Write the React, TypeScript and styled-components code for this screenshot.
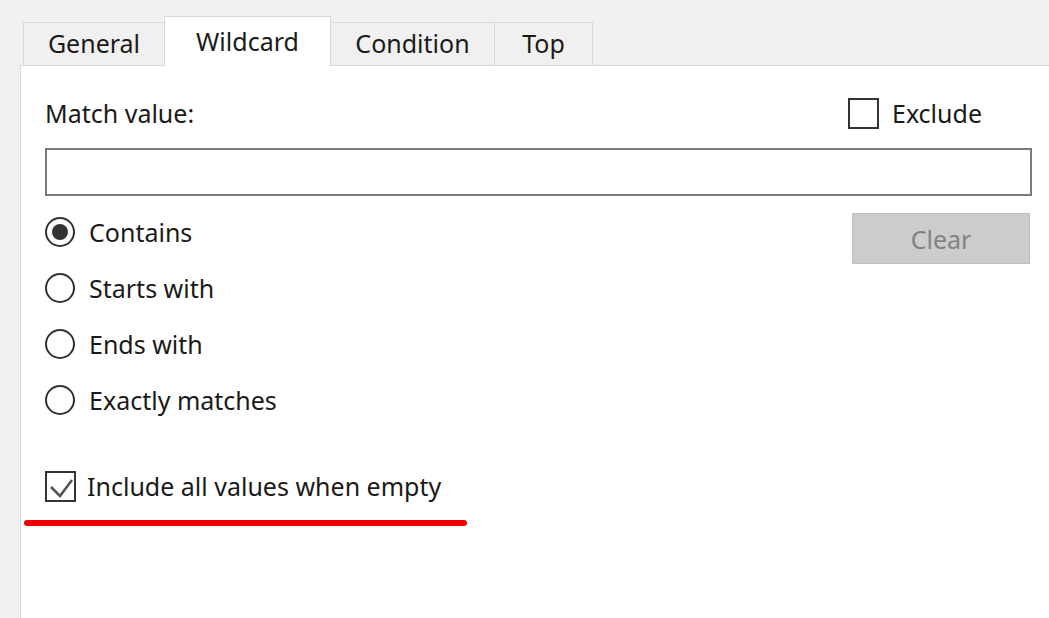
import React from 'react';
import styled, { createGlobalStyle } from 'styled-components';

const GlobalStyle = createGlobalStyle`
  html, body {
    margin: 0;
    padding: 0;
    background: #f0f0f0;
    overflow: hidden;
  }
  body {
    font-family: "Noto Sans", "Open Sans", sans-serif;
    font-size: 25px;
    color: #1a1a1a;
  }
`;

const Window = styled.div`
  display: flex;
  flex-direction: column;
  height: 100vh;
  box-sizing: border-box;
  padding: 16px 0 0 20px;
`;

const TabStrip = styled.div`
  display: flex;
  align-items: flex-end;
  padding-left: 4px;
  height: 49px;
`;

const Tab = styled.div<{ $active?: boolean; $width: number }>`
  box-sizing: border-box;
  display: flex;
  align-items: center;
  justify-content: center;
  width: ${(p) => p.$width}px;
  height: ${(p) => (p.$active ? 50 : 43)}px;
  margin-left: -1px;
  margin-bottom: ${(p) => (p.$active ? -1 : 0)}px;
  border: 1px solid #d9d9d9;
  border-bottom: none;
  background: ${(p) => (p.$active ? '#ffffff' : '#f0f0f0')};
  position: relative;
  z-index: ${(p) => (p.$active ? 1 : 0)};
  padding-bottom: 2px;
`;

const Panel = styled.div`
  flex: 1;
  display: flex;
  flex-direction: column;
  background: #ffffff;
  border-top: 1px solid #d9d9d9;
  border-left: 1px solid #d9d9d9;
  padding: 0 17px 0 24px;
`;

const HeaderRow = styled.div`
  display: flex;
  align-items: center;
  justify-content: space-between;
  height: 32px;
  margin-top: 31px;
`;

const Label = styled.span`
  line-height: 1;
`;

const CheckRow = styled.label<{ $gap: number }>`
  display: flex;
  align-items: center;
  gap: ${(p) => p.$gap}px;
`;

const ExcludeRow = styled(CheckRow)`
  margin-right: 50px;
`;

const Box = styled.span`
  box-sizing: border-box;
  display: flex;
  align-items: center;
  justify-content: center;
  width: 31px;
  height: 31px;
  border: 2px solid #333333;
  background: #ffffff;
`;

const TextInput = styled.div`
  box-sizing: border-box;
  height: 48px;
  margin-top: 19px;
  border: 2px solid #7a7a7a;
  background: #ffffff;
`;

const Options = styled.div`
  display: flex;
  justify-content: space-between;
  align-items: flex-start;
  margin-top: 8px;
`;

const RadioList = styled.div`
  display: flex;
  flex-direction: column;
`;

const RadioRow = styled.label`
  display: flex;
  align-items: center;
  gap: 14px;
  height: 56px;
`;

const Circle = styled.span<{ $checked?: boolean }>`
  box-sizing: border-box;
  display: flex;
  align-items: center;
  justify-content: center;
  width: 30px;
  height: 30px;
  border-radius: 50%;
  border: 2px solid #333333;
  background: #ffffff;

  &::after {
    content: '';
    display: ${(p) => (p.$checked ? 'block' : 'none')};
    width: 16px;
    height: 16px;
    border-radius: 50%;
    background: #333333;
  }
`;

const ClearButton = styled.div`
  box-sizing: border-box;
  display: flex;
  align-items: center;
  justify-content: center;
  width: 178px;
  height: 51px;
  margin: 9px 2px 0 0;
  background: #cccccc;
  border: 1px solid #bfbfbf;
  color: #838383;
`;

const IncludeRow = styled(CheckRow)`
  height: 40px;
  margin-top: 38px;
`;

const RedMark = styled.div`
  width: 443px;
  height: 6px;
  margin: 14px 0 0 -21px;
  border-radius: 3px;
  background: #ee0000;
`;

const tabs = [
  { name: 'General', width: 142 },
  { name: 'Wildcard', width: 167 },
  { name: 'Condition', width: 165 },
  { name: 'Top', width: 99 },
];

const radios = ['Contains', 'Starts with', 'Ends with', 'Exactly matches'];

const CheckMark = () => (
  <svg width="27" height="27" viewBox="0 0 27 27">
    <path d="M4 14 L13 23 L25 7" fill="none" stroke="#555555" strokeWidth="2.6" />
  </svg>
);

const App: React.FC = () => {
  return (
    <Window>
      <GlobalStyle />
      <TabStrip>
        {tabs.map((tab) => (
          <Tab key={tab.name} $width={tab.width} $active={tab.name === 'Wildcard'}>
            {tab.name}
          </Tab>
        ))}
      </TabStrip>
      <Panel>
        <HeaderRow>
          <Label>Match value:</Label>
          <ExcludeRow $gap={13}>
            <Box />
            <Label>Exclude</Label>
          </ExcludeRow>
        </HeaderRow>
        <TextInput />
        <Options>
          <RadioList>
            {radios.map((r) => (
              <RadioRow key={r}>
                <Circle $checked={r === 'Contains'} />
                <Label>{r}</Label>
              </RadioRow>
            ))}
          </RadioList>
          <ClearButton>Clear</ClearButton>
        </Options>
        <IncludeRow $gap={11}>
          <Box>
            <CheckMark />
          </Box>
          <Label>Include all values when empty</Label>
        </IncludeRow>
        <RedMark />
      </Panel>
    </Window>
  );
};

export default App;
